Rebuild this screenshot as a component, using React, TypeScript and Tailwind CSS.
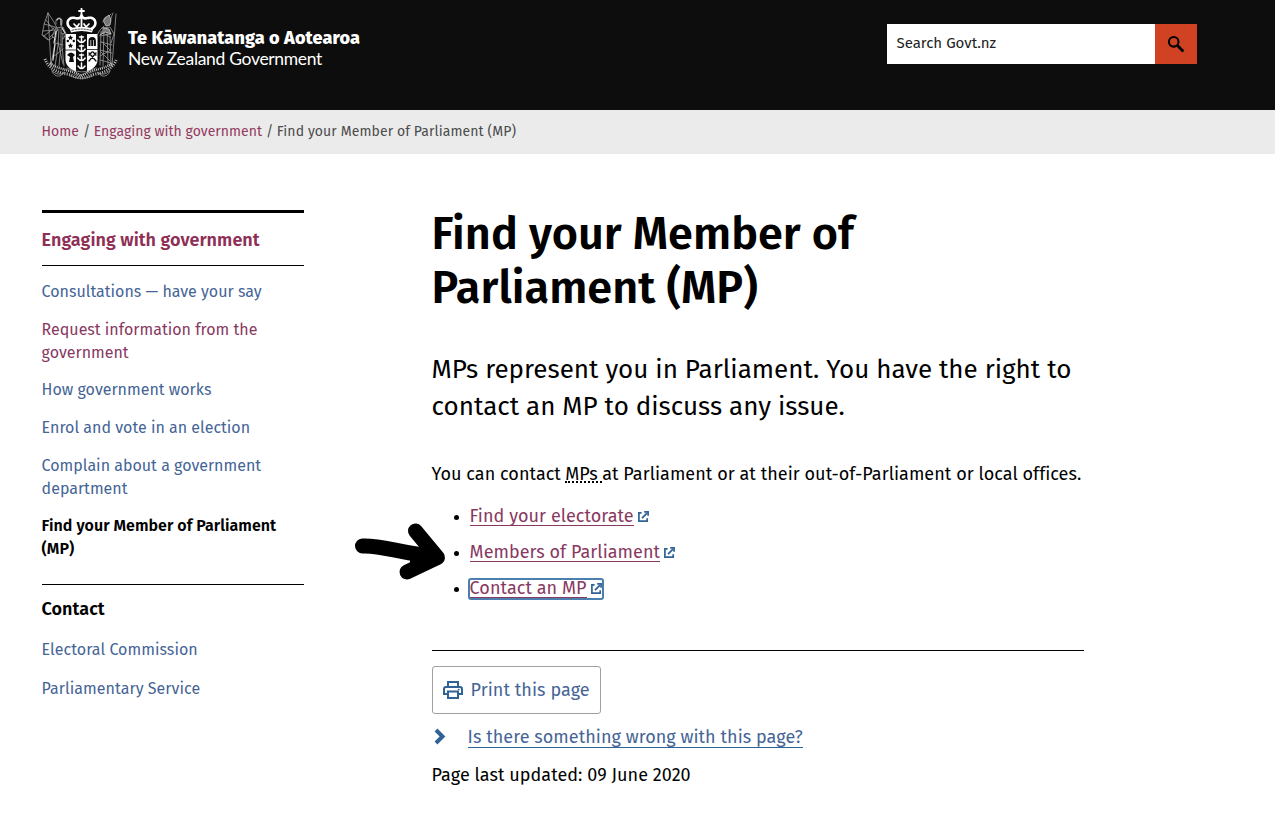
import type { ReactNode } from "react";

const crumbs = ["Home", "Engaging with government"];

const sideLinks = [
  { label: "Consultations — have your say", visited: false },
  { label: "Request information from the government", visited: true },
  { label: "How government works", visited: false },
  { label: "Enrol and vote in an election", visited: false },
  { label: "Complain about a government department", visited: false },
];

function Crest() {
  return (
    <svg width="78" height="72" viewBox="0 0 78 72" fill="none" stroke="#e8e8e8" strokeWidth="0.8" strokeLinecap="round">
      {/* crown */}
      <path d="M40.500 0.500v6M38 3h5" stroke="#fff" strokeWidth="1.800" />
      <path d="M31 21C23 17 27 8 34 10c4 1 6 0 6.500-3 .5 3 2.500 4 6.500 3 7-2 11 7 3 11" stroke="#fff" strokeWidth="2.600" strokeDasharray="2.200 0.700" />
      <path d="M40.500 7v13" stroke="#fff" strokeWidth="1.800" />
      <path d="M33 16l3 3 2-3M43 16l2 3 3-3" stroke="#fff" strokeWidth="1.700" />
      <path d="M28.500 20.500q12-3.500 24 0l-1.600 4q-10.400-3-20.800 0z" fill="#fff" stroke="none" />
      <path d="M31 22.300q9.500-2.500 19 0" stroke="#111" strokeDasharray="1.500 1.500" />
      {/* shield */}
      <path d="M24.500 26h32v26c0 7-8 11-16 15-8-4-16-8-16-15z" fill="#fff" stroke="none" />
      <path d="M35 26h11v38l-5.500 3-5.500-3z" fill="#0d0d0d" stroke="none" />
      <path d="M24.500 42h10.500M46 41.500h10.500" stroke="#0d0d0d" />
      <g stroke="#fff" strokeWidth="1.500">
        <path d="M40.500 28v6M36.800 32q3.700 5 7.400 0M38.500 29h4" />
        <path d="M40.500 37v6M36.800 41q3.700 5 7.400 0M38.500 38h4" />
        <path d="M40.500 46v6M36.800 50q3.700 5 7.400 0M38.500 47h4" />
        <path d="M40.500 55v5M37 58q3.500 5 7 0" />
      </g>
      <g fill="#0d0d0d" stroke="none">
        <path d="M29.500 27l.8 1.700 1.900.2-1.400 1.300.4 1.900-1.700-1-1.700 1 .4-1.900-1.400-1.300 1.900-.2zM29.500 35l.8 1.700 1.900.2-1.400 1.300.4 1.900-1.700-1-1.700 1 .4-1.900-1.400-1.300 1.900-.2z" />
        <circle cx="26.800" cy="33" r="1.200" />
        <circle cx="32.800" cy="33" r="1.200" />
        <path d="M26 47q4-5 8 0l-2 2 1 5h-5l1-5z" />
        <path d="M47.500 38v-5q0-4 3.700-4t3.700 4v5h-2v-6h-.7v6h-2v-6h-.7v6z" />
      </g>
      <path d="M48 45l7 8M55 45l-7 8M48 47l3-3M52 44l3 3" stroke="#0d0d0d" strokeWidth="1.300" />
      {/* left supporter with flag */}
      <g stroke="#9c9c9c">
        <path d="M7 5l3 53M7 5C5 11 3 15 2 22l-1 5 6 5M7 5l6 9 4 8-8 7M3 16l11 3M2 23l12-1M5 12l7 9M3 28l10-8M2 27l6 5 4-3" />
        <path d="M15 16q-1-6 3-6t3 5l-1 4M14 20l8-1 3 7-3 5M15 20l-4 8 4 4M16 21l-2 14-4 22M18 21l-1 16-3 22M20 21v17l-2 20M22 26l-1 12 2 20M14 35l8 2M12 49l10-8M17 34l5 22M20 25l4 1" />
      </g>
      <path d="M16 12q2-3 4 0v5M21 20l3 5M15 23l-2 12M14 36l-2 16" stroke="#ddd" strokeWidth="1.200" />
      {/* right supporter with taiaha */}
      <g stroke="#9c9c9c">
        <path d="M75 6L71 58M72 5l-3 8M62 14q1-6 5-5l3-3M63 18l-4 4-3 5M61 20l8-1 4 7-3 9M60 24l9 5M59 28l11-2M60 34l11 3M59 42l12 3M59 48l11-6M59 52l11 3M60 24l-1 33M63 20l-1 38M66 20l1 36M69 28l1 30M61 34l8 8M60 44l9 9" />
      </g>
      <path d="M64 10l4-3 2 5-1 5-4 1-2-4zM62 20l6 1 2 5-6-2-5 3" fill="#777" stroke="#ccc" />
      {/* fern scroll */}
      <path d="M4 51c3 9 13 14 22 15 6 1 10 4 14.500 4s8-3 14-4c9-1 18-6 21-15" stroke="#bdbdbd" strokeWidth="3" strokeDasharray="1 1.300" strokeLinecap="butt" />
      <path d="M9 55c8 7 17 5 31 13 14-8 23-6 31-13" stroke="#ccc" strokeWidth="2.500" strokeDasharray="1 1" strokeLinecap="butt" />
      <path d="M11 63q7 6 13 1l-5 4q-6 1-8-5M69 63q-7 6-13 1l5 4q6 1 8-5M26 60q15 8 29 0M29 68q11 5 23 0" stroke="#999" />
    </svg>
  );
}

function SearchIcon() {
  return (
    <svg className="-mt-px" width="18" height="18" viewBox="0 0 18 18" fill="none" stroke="#000">
      <circle cx="6.700" cy="6.800" r="4.800" strokeWidth="2.100" />
      <path d="M10.400 10.500l6 6" strokeWidth="2.800" />
    </svg>
  );
}

function ExternalIcon() {
  return (
    <svg className="ml-1 inline-block align-[0.5px]" width="11" height="11" viewBox="0 0 11 11" fill="none" stroke="#2f6396" strokeWidth="1.700">
      <path d="M3.600 1.800H.9v8.300h8.300V7.300" />
      <path d="M4 7.200l5-5" />
      <path d="M6.200.9h3.900v3.900" />
    </svg>
  );
}

function External({ children, focused }: { children: ReactNode; focused?: boolean }) {
  return (
    <li className="relative h-9 leading-[25px]">
      <span className="absolute top-[11px] -left-4 size-[5px] rounded-full bg-black" />
      <a href="#" className="relative inline-block text-[#88395f]">
        <span className="inline-block h-[22px] border-b border-[#88395f]">{children}</span>
        <ExternalIcon />
        {focused && <span className="absolute top-[2px] -right-[2px] -left-[2px] h-[22px] rounded-[3px] border-2 border-[#4a7fb0]" />}
      </a>
    </li>
  );
}

function PrintIcon() {
  return (
    <svg width="20" height="18" viewBox="0 0 20 18" fill="none" stroke="#2f6396" strokeWidth="2">
      <path d="M5 5V1h10v4M5 13H1V8q0-2 2-2h14q2 0 2 2v5h-4" />
      <path d="M5 10.500h10V17H5z" />
      <path d="M14.800 8.500h1.800" strokeWidth="1.400" />
    </svg>
  );
}

function Arrow() {
  return (
    <svg className="absolute top-[520px] left-[353px]" width="96" height="62" viewBox="0 0 96 62" fill="none" stroke="#000" strokeLinecap="round" strokeLinejoin="round">
      <path d="M9.500 26C30 25 48 34 82 36" strokeWidth="15" />
      <path d="M62.500 11L84.500 37.500 54 52" strokeWidth="15" />
      <path d="M60 35l22 1-22 10z" fill="#000" strokeWidth="6" />
    </svg>
  );
}

export default function App() {
  return (
    <div className="relative h-[823px] w-[1275px] overflow-hidden bg-white font-['Fira_Sans','Noto_Sans',sans-serif] text-black">
      <header className="flex h-[110px] items-start justify-between bg-[#0d0d0d] pr-[78px] pl-[41px]">
        <div className="flex pt-2 text-white">
          <Crest />
          <div className="pt-[19px] pl-[9px] whitespace-nowrap">
            <div className="text-[18px] leading-[22px] font-extrabold tracking-[0.17px]">Te Kāwanatanga o Aotearoa</div>
            <div className="font-['Lato',sans-serif] text-[17.500px] leading-[20px] tracking-[-0.32px]">New Zealand Government</div>
          </div>
        </div>
        <div className="mt-6 flex h-10 w-[310px]">
          <div className="flex-1 bg-white pl-[9.500px] text-[15px] leading-[39px] text-[#222]">Search Govt.nz</div>
          <button className="flex w-[42px] items-center justify-center bg-[#d14124]">
            <SearchIcon />
          </button>
        </div>
      </header>

      <nav className="h-11 bg-[#ebebeb] pl-[41.500px] text-[14px] leading-[43px] whitespace-nowrap text-[#4c4c4c]">
        {crumbs.map((c) => (
          <span key={c}>
            <a href="#" className="tracking-[0.03px] text-[#933a60]">{c}</a>
            <span className="pr-[3.500px] pl-[4px]">/</span>
          </span>
        ))}
        <span className="tracking-[0.1px]">Find your Member of Parliament (MP)</span>
      </nav>

      <div className="flex pt-14 pl-[42px]">
        <aside className="-ml-[0.400px] w-[262.400px] shrink-0 border-t-[3px] border-black text-[16px] leading-[23px]">
          <h2 className="h-[53px] border-b border-black pt-[16px] text-[18px] font-semibold tracking-[0.040px] text-[#8f2f56]">Engaging with government</h2>
          <ul className="flex flex-col gap-[14.700px] border-b border-black pt-[14px] pb-[23.500px]">
            {sideLinks.map((l) => (
              <li key={l.label}>
                <a href="#" className={l.visited ? "text-[#88395f]" : "text-[#456596]"}>{l.label}</a>
              </li>
            ))}
            <li className="font-semibold tracking-[0.040px]">Find your Member of Parliament (MP)</li>
          </ul>
          <h3 className="pt-[13px] text-[18px] font-semibold tracking-[0.040px]">Contact</h3>
          <ul className="flex flex-col gap-4 pt-[17px] tracking-[0.040px] text-[#456596]">
            <li><a href="#">Electoral Commission</a></li>
            <li><a href="#">Parliamentary Service</a></li>
          </ul>
        </aside>

        <main className="ml-32 w-[652px] text-[18px]">
          <h1 className="-mt-[3px] -ml-[0.600px] w-[500px] text-[45px] leading-[54px] font-semibold tracking-[0.040px]">Find your Member of Parliament (MP)</h1>
          <p className="mt-[36px] -ml-[0.400px] text-[26px] leading-[37px] tracking-[0.010px]">MPs represent you in Parliament. You have the right to contact an MP to discuss any issue.</p>
          <p className="mt-[36px] -ml-[0.400px] leading-[26px] tracking-[0.040px] whitespace-nowrap">
            You can contact <span className="-ml-[0.500px] inline-block h-[22px] border-b-2 border-dotted border-black pr-[4.500px] align-top leading-[26px]">MPs</span>
            at Parliament or at their out-of-Parliament or local offices.
          </p>
          <ul className="mt-[17px] pl-[37.600px] tracking-[0.045px]">
            <External>Find your electorate</External>
            <External>Members of Parliament</External>
            <External focused>Contact an MP</External>
          </ul>
          <hr className="mt-[38px] border-t border-black" />
          <button className="mt-[15px] flex h-12 w-[169px] items-center gap-[7.500px] rounded-[3px] border border-[#a0a0a0] pl-[10px] tracking-[0.060px] whitespace-nowrap text-[#456596]">
            <PrintIcon />
            Print this page
          </button>
          <div className="mt-[10px] flex h-[26px] text-[#456596]">
            <svg className="mt-[4px] mr-[21.600px] ml-[2px]" width="12" height="17" viewBox="0 0 12 17" fill="none" stroke="#2f6396" strokeWidth="4">
              <path d="M2 2l6.500 6.500L2 15" />
            </svg>
            <a href="#" className="h-[24px] border-b border-[#2f6396] leading-[26px] tracking-[0.045px]">Is there something wrong with this page?</a>
          </div>
          <p className="mt-[12px] -ml-[0.400px] leading-[26px] tracking-[0.045px]">Page last updated: 09 June 2020</p>
        </main>
      </div>
      <Arrow />
    </div>
  );
}
